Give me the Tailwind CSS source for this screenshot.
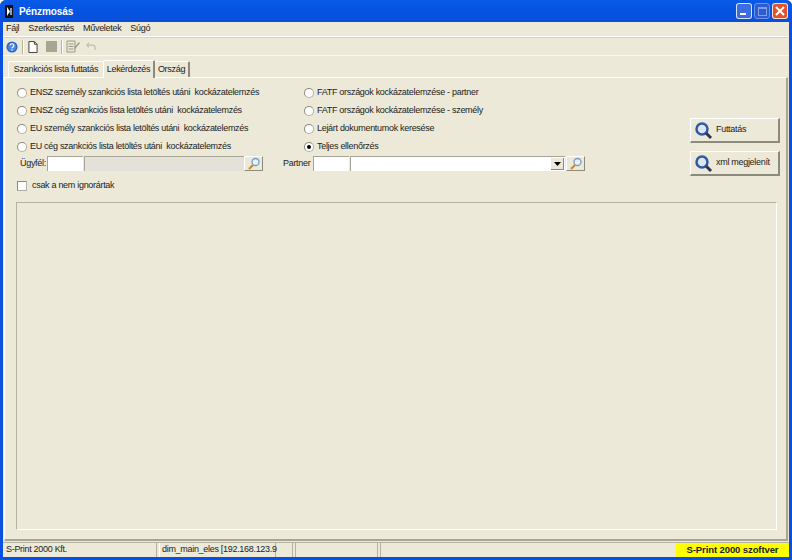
<!DOCTYPE html>
<html><head><meta charset="utf-8"><script src="https://cdn.jsdelivr.net/npm/@tailwindcss/browser@4"></script></head>
<body class="m-0 overflow-hidden">
<div class="w-[792px] h-[560px] flex flex-col font-['Liberation_Sans',sans-serif] text-[9px] tracking-[-0.3px] text-[#222] bg-[#0a50e0] rounded-t-[6px] overflow-hidden">
  <!-- title bar -->
  <div class="h-[22px] shrink-0 flex items-center pl-[5px] pr-[4px] bg-gradient-to-b from-[#0a5ae8] via-[#0553e0] to-[#0a4fd8]">
    <svg width="9" height="13" viewBox="0 0 9 13"><rect x="0" y="0" width="8" height="13" fill="#111"/><path d="M2 2l3 4.500-3 4.500z" fill="#fff"/><path d="M5 3h2v7H5z" fill="#8aa0c8"/></svg>
    <span class="ml-[5px] font-bold text-[10px] tracking-[-0.1px] text-white">Pénzmosás</span>
    <div class="ml-auto flex gap-[2px]">
      <div class="w-[16px] h-[16px] rounded-[3px] border border-white/80 bg-[#3c6ce0] flex items-end pl-[3px] pb-[3px]"><div class="w-[6px] h-[2px] bg-white"></div></div>
      <div class="w-[16px] h-[16px] rounded-[3px] border border-[#6d93e8] bg-[#2c5cd0] flex items-center justify-center"><div class="w-[9px] h-[9px] border border-[#7f9fe8] border-t-2"></div></div>
      <div class="w-[16px] h-[16px] rounded-[3px] border border-white/80 bg-[#e0532c] flex items-center justify-center"><svg width="10" height="10" viewBox="0 0 10 10"><path d="M1 1l8 8M9 1l-8 8" stroke="#fff" stroke-width="2"/></svg></div>
    </div>
  </div>
  <!-- client -->
  <div class="mx-[3px] flex-1 flex flex-col bg-[#ece9d8] min-h-0">
    <div class="h-[15px] shrink-0 flex items-center gap-[9px] pl-[3px] border-b border-white">
      <span>Fájl</span><span>Szerkesztés</span><span>Műveletek</span><span>Súgó</span>
    </div>
    <div class="h-[18px] shrink-0 flex items-center pl-[3px] border-t border-[#d8d4c0]">
      <svg width="12" height="12" viewBox="0 0 13 13"><circle cx="6.5" cy="6.5" r="6" fill="#2a62c8"/><circle cx="6.5" cy="6.5" r="4.5" fill="#4a86e0"/><path d="M4.5 5a2 2 0 1 1 2.6 1.9c-.5.2-.6.5-.6 1" stroke="#fff" stroke-width="1.3" fill="none"/><rect x="5.8" y="9" width="1.4" height="1.4" fill="#fff"/></svg>
      <div class="w-px h-[14px] bg-[#b5b2a2] border-r border-white ml-[4px] box-content"></div>
      <svg class="ml-[4px]" width="10" height="12" viewBox="0 0 11 13"><path d="M1 .5h6l3 3v9H1z" fill="#fff" stroke="#333"/><path d="M7 .5v3h3" fill="none" stroke="#333"/></svg>
      <div class="ml-[8px] w-[11px] h-[11px] bg-[#a8a594]"></div>
      <div class="w-px h-[14px] bg-[#b5b2a2] border-r border-white ml-[4px] box-content"></div>
      <svg class="ml-[3px]" width="14" height="13" viewBox="0 0 14 13"><path d="M1 1h8v11H1z" fill="#ece9d8" stroke="#9a9888"/><path d="M2.5 4h5M2.5 6.500h5M2.500 9h5" stroke="#9a9888"/><path d="M8 8l5-6 1 1-5 6z" fill="#9a9888"/></svg>
      <svg class="ml-[6px]" width="11" height="9" viewBox="0 0 12 10"><path d="M3 1L1 3.500 3 6M1 3.500h6a3 3 0 0 1 3 3V9" fill="none" stroke="#c0bdac" stroke-width="1.300"/></svg>
    </div>
    <!-- tabs -->
    <div class="h-[22px] shrink-0 flex items-end pl-[5px] border-t border-white/70 relative z-10">
      <div class="h-[16px] w-[95px] flex items-center justify-center border-t border-l border-white rounded-t-[2px] whitespace-nowrap">Szankciós lista futtatás</div>
      <div class="h-[18px] w-[52px] -mb-[1px] flex items-start pt-[2px] justify-center bg-[#ece9d8] border-t border-l border-white border-r-2 border-r-[#8c8a7c] rounded-t-[2px]">Lekérdezés</div>
      <div class="h-[16px] w-[35px] flex items-center justify-center border-t border-white border-r-2 border-r-[#8c8a7c] rounded-t-[2px]">Ország</div>
    </div>
    <div class="mx-[1px] flex-1 min-h-0 flex flex-col border-l border-t border-white border-r-2 border-r-[#a7a595] border-b-2 border-b-[#a7a595] pb-[9px] pr-[9px] pl-[11px]">
      <div class="h-[124px] shrink-0 flex relative">
        <div class="flex-1 flex flex-col pt-[6px]">
          <div class="grid grid-cols-[287px_1fr] pl-[1px] auto-rows-[18px]">
            <label class="flex items-center gap-[3px] whitespace-pre"><span class="w-[10px] h-[10px] rounded-full bg-white border border-[#b0afa4] border-t-[#8c8a7c] border-l-[#8c8a7c]"></span>ENSZ személy szankciós lista letöltés utáni  kockázatelemzés</label>
            <label class="flex items-center gap-[3px] whitespace-pre"><span class="w-[10px] h-[10px] rounded-full bg-white border border-[#b0afa4] border-t-[#8c8a7c] border-l-[#8c8a7c]"></span>FATF országok kockázatelemzése - partner</label>
            <label class="flex items-center gap-[3px] whitespace-pre"><span class="w-[10px] h-[10px] rounded-full bg-white border border-[#b0afa4] border-t-[#8c8a7c] border-l-[#8c8a7c]"></span>ENSZ cég szankciós lista letöltés utáni  kockázatelemzés</label>
            <label class="flex items-center gap-[3px] whitespace-pre"><span class="w-[10px] h-[10px] rounded-full bg-white border border-[#b0afa4] border-t-[#8c8a7c] border-l-[#8c8a7c]"></span>FATF országok kockázatelemzése - személy</label>
            <label class="flex items-center gap-[3px] whitespace-pre"><span class="w-[10px] h-[10px] rounded-full bg-white border border-[#b0afa4] border-t-[#8c8a7c] border-l-[#8c8a7c]"></span>EU személy szankciós lista letöltés utáni  kockázatelemzés</label>
            <label class="flex items-center gap-[3px] whitespace-pre"><span class="w-[10px] h-[10px] rounded-full bg-white border border-[#b0afa4] border-t-[#8c8a7c] border-l-[#8c8a7c]"></span>Lejárt dokumentumok keresése</label>
            <label class="flex items-center gap-[3px] whitespace-pre"><span class="w-[10px] h-[10px] rounded-full bg-white border border-[#b0afa4] border-t-[#8c8a7c] border-l-[#8c8a7c]"></span>EU cég szankciós lista letöltés utáni  kockázatelemzés</label>
            <label class="flex items-center gap-[3px] whitespace-pre"><span class="w-[10px] h-[10px] rounded-full bg-white border border-[#b0afa4] border-t-[#8c8a7c] border-l-[#8c8a7c] flex items-center justify-center"><span class="w-[4px] h-[4px] rounded-full bg-black"></span></span>Teljes ellenőrzés</label>
          </div>
          <div class="flex items-center h-[15px] pl-[4px]">
            <span class="w-[27px]">Ügyfél:</span>
            <div class="w-[36px] h-[15px] bg-white border-t border-l border-[#a7a595]"></div>
            <div class="ml-[1px] w-[160px] h-[15px] bg-[#e3e1d8] border-t border-l border-[#a7a595]"></div>
            <div class="w-[19px] h-[15px] flex items-center justify-center border-b border-r border-[#8c8a7c] border-t border-l border-t-white border-l-white">
              <svg width="14" height="13" viewBox="0 0 14 13"><circle cx="8.500" cy="5" r="3.500" fill="#e8f0fa" stroke="#7a9cc8" stroke-width="1.300"/><path d="M6 8L2 12" stroke="#c88a30" stroke-width="2.200"/></svg>
            </div>
            <span class="ml-[20px] w-[30px]">Partner</span>
            <div class="w-[36px] h-[15px] bg-white border-t border-l border-[#a7a595]"></div>
            <div class="ml-[1px] w-[215px] h-[15px] bg-white border-t border-l border-[#a7a595] flex justify-end items-center pr-[1px]">
              <div class="w-[13px] h-[12px] bg-[#ece9d8] border-r border-b border-[#8c8a7c] flex items-center justify-center"><svg width="7" height="4" viewBox="0 0 7 4"><path d="M0 0h7L3.500 4z" fill="#000"/></svg></div>
            </div>
            <div class="ml-[1px] w-[19px] h-[15px] flex items-center justify-center border-b border-r border-[#8c8a7c] border-t border-l border-t-white border-l-white">
              <svg width="14" height="13" viewBox="0 0 14 13"><circle cx="8.500" cy="5" r="3.500" fill="#e8f0fa" stroke="#7a9cc8" stroke-width="1.300"/><path d="M6 8L2 12" stroke="#c88a30" stroke-width="2.200"/></svg>
            </div>
          </div>
          <label class="flex items-center gap-[5px] mt-[10px] pl-[1px] h-[10px]"><span class="w-[10px] h-[10px] bg-white border border-[#b0afa4] border-t-[#8c8a7c] border-l-[#8c8a7c]"></span>csak a nem ignorártak</label>
        </div>
        <div class="w-[90px] shrink-0 flex flex-col gap-[8px] pt-[40px] mr-[-3px]">
          <div class="h-[25px] flex items-center gap-[3px] pl-[3px] border-t border-l border-white border-r-2 border-b-2 border-r-[#8c8a7c] border-b-[#8c8a7c]">
            <svg width="19" height="19" viewBox="0 0 19 19"><circle cx="8" cy="8" r="5.500" fill="#dce6f2" stroke="#3058a8" stroke-width="2.500"/><path d="M12 12l5 5" stroke="#334" stroke-width="3"/></svg><span>Futtatás</span>
          </div>
          <div class="h-[25px] flex items-center gap-[3px] pl-[3px] border-t border-l border-white border-r-2 border-b-2 border-r-[#8c8a7c] border-b-[#8c8a7c]">
            <svg width="19" height="19" viewBox="0 0 19 19"><circle cx="8" cy="8" r="5.500" fill="#dce6f2" stroke="#3058a8" stroke-width="2.500"/><path d="M12 12l5 5" stroke="#334" stroke-width="3"/></svg><span>xml megjelenít</span>
          </div>
        </div>
      </div>
      <div class="flex-1 border-l border-t border-[#b5b2a2] border-r border-b border-r-white border-b-white"></div>
    </div>
    <!-- status -->
    <div class="h-[15px] shrink-0 mt-[1px] flex border-t border-[#b5b2a2] bg-[#ece9d8]">
      <div class="w-[154px] pl-[3px] border-r border-[#b5b2a2] flex items-center">S-Print 2000 Kft.</div>
      <div class="w-[117px] pl-[2px] ml-[2px] border-l border-white border-r border-r-[#b5b2a2] flex items-center whitespace-nowrap">dim_main_eles [192.168.123.9</div>
      <div class="w-[16px] ml-[1px] border-r border-[#b5b2a2]"></div>
      <div class="w-[83px] ml-[2px] border-l border-[#b5b2a2] border-r"></div>
      <div class="flex-1 ml-[2px] border-l border-[#b5b2a2]"></div>
      <div class="w-[113px] bg-[#ffff00] font-bold text-[9.500px] tracking-[-0.1px] flex items-center justify-center whitespace-pre">S-Print 2000 szoftver</div>
    </div>
  </div>
  <div class="h-[3px] shrink-0"></div>
</div>
</body></html>
